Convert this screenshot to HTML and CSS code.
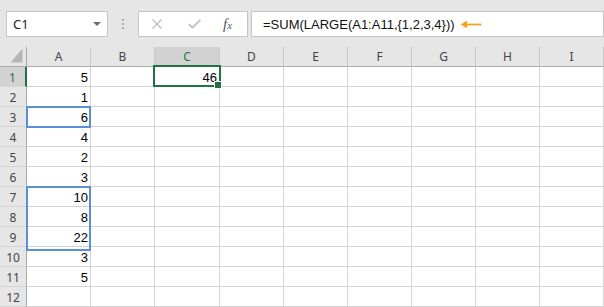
FILE: index.html
```html
<!DOCTYPE html>
<html lang="en">
<head>
    <meta charset="UTF-8">
    <meta name="viewport" content="width=device-width, initial-scale=1.0">
    <title>LARGE - Excel</title>
    <link rel="stylesheet" href="styles.css">
</head>
<body>
    <!-- Barra de formulas -->
    <div class="formula-bar">
        <div class="name-box">
            <span>C1</span>
            <span class="dropdown"></span>
        </div>
        <div class="grip"><i></i><i></i><i></i></div>
        <div class="fx-buttons">
            <svg class="icon-cancel" width="10" height="10" viewBox="0 0 10 10">
                <path d="M0.5 0.5 L9.5 9.5 M9.5 0.5 L0.5 9.5" stroke="#bdbdbd" stroke-width="1.4" fill="none"/>
            </svg>
            <svg class="icon-enter" width="13" height="10" viewBox="0 0 13 10">
                <path d="M0.8 5.2 L4.6 8.6 L12.4 0.8" stroke="#bdbdbd" stroke-width="1.8" fill="none"/>
            </svg>
            <span class="fx">f<small>x</small></span>
        </div>
        <div class="formula-input">
            <span>=SUM(LARGE(A1:A11,{1,2,3,4}))</span>
            <svg class="arrow" width="22" height="9" viewBox="0 0 22 9">
                <path d="M0.5 4.5 L7 0.8 L7 8.2 Z" fill="#f5a31f"/>
                <rect x="6" y="3.6" width="15.5" height="1.8" fill="#f5a31f"/>
            </svg>
        </div>
    </div>

    <!-- Hoja -->
    <div class="sheet">
        <div class="corner">
            <svg width="27" height="19" viewBox="0 0 27 19">
                <path d="M22.5 1.5 L22.5 15.5 L10.5 15.5 Z" fill="#b4b4b4"/>
            </svg>
        </div>
        <div class="ch">A</div><div class="ch">B</div><div class="ch on">C</div><div class="ch">D</div><div class="ch">E</div><div class="ch">F</div><div class="ch">G</div><div class="ch">H</div><div class="ch">I</div>

        <div class="rh on">1</div><div class="c">5</div><div class="c"></div><div class="c active">46</div><div class="c"></div><div class="c"></div><div class="c"></div><div class="c"></div><div class="c"></div><div class="c"></div>
        <div class="rh">2</div><div class="c">1</div><div class="c"></div><div class="c"></div><div class="c"></div><div class="c"></div><div class="c"></div><div class="c"></div><div class="c"></div><div class="c"></div>
        <div class="rh">3</div><div class="c ref-one">6</div><div class="c"></div><div class="c"></div><div class="c"></div><div class="c"></div><div class="c"></div><div class="c"></div><div class="c"></div><div class="c"></div>
        <div class="rh">4</div><div class="c">4</div><div class="c"></div><div class="c"></div><div class="c"></div><div class="c"></div><div class="c"></div><div class="c"></div><div class="c"></div><div class="c"></div>
        <div class="rh">5</div><div class="c">2</div><div class="c"></div><div class="c"></div><div class="c"></div><div class="c"></div><div class="c"></div><div class="c"></div><div class="c"></div><div class="c"></div>
        <div class="rh">6</div><div class="c">3</div><div class="c"></div><div class="c"></div><div class="c"></div><div class="c"></div><div class="c"></div><div class="c"></div><div class="c"></div><div class="c"></div>
        <div class="rh">7</div><div class="c ref-three">10</div><div class="c"></div><div class="c"></div><div class="c"></div><div class="c"></div><div class="c"></div><div class="c"></div><div class="c"></div><div class="c"></div>
        <div class="rh">8</div><div class="c">8</div><div class="c"></div><div class="c"></div><div class="c"></div><div class="c"></div><div class="c"></div><div class="c"></div><div class="c"></div><div class="c"></div>
        <div class="rh">9</div><div class="c">22</div><div class="c"></div><div class="c"></div><div class="c"></div><div class="c"></div><div class="c"></div><div class="c"></div><div class="c"></div><div class="c"></div>
        <div class="rh">10</div><div class="c">3</div><div class="c"></div><div class="c"></div><div class="c"></div><div class="c"></div><div class="c"></div><div class="c"></div><div class="c"></div><div class="c"></div>
        <div class="rh">11</div><div class="c">5</div><div class="c"></div><div class="c"></div><div class="c"></div><div class="c"></div><div class="c"></div><div class="c"></div><div class="c"></div><div class="c"></div>
        <div class="rh">12</div><div class="c"></div><div class="c"></div><div class="c"></div><div class="c"></div><div class="c"></div><div class="c"></div><div class="c"></div><div class="c"></div><div class="c"></div>
    </div>
</body>
</html>
```

FILE: styles.css
```css
* {
    box-sizing: border-box;
}
body {
    margin: 0;
    width: 604px;
    height: 307px;
    overflow: hidden;
    background-color: #e6e6e6;
    font-family: "Liberation Sans", Arial, sans-serif;
}
.formula-bar {
    display: flex;
    align-items: flex-start;
    height: 47px;
    padding: 11px 0 0 6px;
}
.name-box {
    display: flex;
    align-items: center;
    justify-content: space-between;
    width: 102px;
    height: 26px;
    padding: 0 6px;
    background-color: #ffffff;
    border: 1px solid #c6c6c6;
    font-family: "Noto Sans", sans-serif;
    font-size: 13px;
    color: #222;
}
.dropdown {
    width: 0;
    height: 0;
    border-left: 4px solid transparent;
    border-right: 4px solid transparent;
    border-top: 4px solid #6d6d6d;
}
.grip {
    display: flex;
    flex-direction: column;
    gap: 2px;
    margin: 8px 0 0 14px;
}
.grip i {
    display: block;
    width: 2px;
    height: 2px;
    background-color: #b0b0b0;
}
.fx-buttons {
    display: flex;
    align-items: center;
    width: 110px;
    height: 26px;
    margin-left: 14px;
    padding-left: 13px;
    background-color: #ffffff;
    border: 1px solid #c6c6c6;
}
.icon-enter {
    margin-left: 26px;
}
.fx {
    margin-left: 22px;
    font-family: "Liberation Serif", serif;
    font-style: italic;
    font-size: 15px;
    color: #555;
}
.fx small {
    font-size: 11px;
}
.formula-input {
    flex: 1;
    display: flex;
    align-items: center;
    height: 26px;
    margin-left: 3px;
    padding-left: 11px;
    background-color: #ffffff;
    border: 1px solid #c6c6c6;
    font-size: 13px;
    color: #111;
}
.arrow {
    margin-left: 5px;
}

.sheet {
    display: grid;
    grid-template-columns: 27px 64px 64px 65px repeat(6, 64px);
    grid-auto-rows: 20px;
}
.corner {
    border-right: 1px solid #ababab;
    border-bottom: 1px solid #ababab;
}
.corner svg {
    display: block;
}
.ch {
    border-right: 1px solid #c8c8c8;
    border-bottom: 1px solid #ababab;
    text-align: center;
    font-family: "Noto Sans", sans-serif;
    font-size: 12px;
    line-height: 19px;
    color: #444;
}
.rh {
    border-right: 1px solid #ababab;
    border-bottom: 1px solid #d4d4d4;
    padding-top: 2px;
    text-align: center;
    font-family: "Noto Sans", sans-serif;
    font-size: 12px;
    line-height: 17px;
    color: #444;
}
.ch.on,
.rh.on {
    background-color: #d2d2d2;
    color: #217346;
}
.rh.on {
    border-right: 2px solid #217346;
}
.c {
    position: relative;
    background-color: #ffffff;
    border-right: 1px solid #d4d4d4;
    border-bottom: 1px solid #d4d4d4;
    padding: 1px 2px 0 0;
    text-align: right;
    font-size: 13px;
    line-height: 19px;
    color: #000;
}

/* celda activa */
.c.active::after {
    content: "";
    position: absolute;
    top: -2px;
    left: -2px;
    right: -2px;
    bottom: -1px;
    border: 2px solid #217346;
    z-index: 2;
}
.c.active::before {
    content: "";
    position: absolute;
    right: -3px;
    bottom: -3px;
    width: 6px;
    height: 6px;
    background-color: #217346;
    border: 1px solid #ffffff;
    z-index: 3;
}

/* rangos de referencia */
.c.ref-one::after,
.c.ref-three::after {
    content: "";
    position: absolute;
    top: -1px;
    left: -1px;
    right: -1px;
    border: 2px solid #5b8fd5;
    z-index: 1;
}
.c.ref-one::after {
    bottom: -2px;
}
.c.ref-three::after {
    height: 61px;
}
```
